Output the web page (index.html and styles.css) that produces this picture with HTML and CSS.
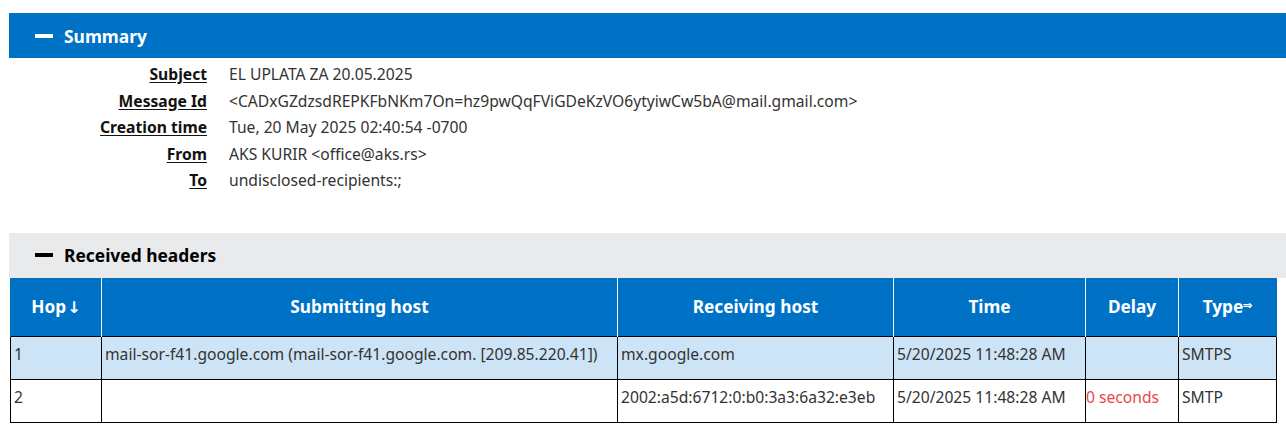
FILE: index.html
```html
<!DOCTYPE html>
<html lang="en">
<head>
<meta charset="utf-8">
<title>Message header analysis</title>
<link rel="stylesheet" href="styles.css">
</head>
<body>
<div class="page">
  <section class="section">
    <h2 class="bar bar-blue"><span class="minus"></span>Summary</h2>
    <table class="summary">
      <tr><th>Subject</th><td>EL UPLATA ZA 20.05.2025</td></tr>
      <tr><th>Message Id</th><td>&lt;CADxGZdzsdREPKFbNKm7On=hz9pwQqFViGDeKzVO6ytyiwCw5bA@mail.gmail.com&gt;</td></tr>
      <tr><th>Creation time</th><td>Tue, 20 May 2025 02:40:54 -0700</td></tr>
      <tr><th>From</th><td>AKS KURIR &lt;office@aks.rs&gt;</td></tr>
      <tr><th>To</th><td>undisclosed-recipients:;</td></tr>
    </table>
  </section>
  <section class="section section-received">
    <h2 class="bar bar-gray"><span class="minus minus-dark"></span>Received headers</h2>
    <table class="hops">
      <colgroup>
        <col class="c-hop"><col class="c-sub"><col class="c-rec"><col class="c-time"><col class="c-delay"><col class="c-type">
      </colgroup>
      <thead>
        <tr><th>Hop<span class="down">↓</span></th><th>Submitting host</th><th>Receiving host</th><th>Time</th><th>Delay</th><th>Type<span class="arrow">⇒</span></th></tr>
      </thead>
      <tbody>
        <tr class="alt"><td>1</td><td>mail-sor-f41.google.com (mail-sor-f41.google.com. [209.85.220.41])</td><td>mx.google.com</td><td>5/20/2025 11:48:28 AM</td><td></td><td>SMTPS</td></tr>
        <tr><td>2</td><td></td><td>2002:a5d:6712:0:b0:3a3:6a32:e3eb</td><td>5/20/2025 11:48:28 AM</td><td class="delay">0 seconds</td><td>SMTP</td></tr>
      </tbody>
    </table>
  </section>
</div>
</body>
</html>
```
FILE: styles.css
```css
html, body {
  margin: 0;
  padding: 0;
  background: #ffffff;
}
body {
  font-family: "Noto Sans", "Open Sans", sans-serif;
  font-size: 15.65px;
  color: #333333;
}
.page {
  padding: 13px 0 0 9px;
}
.bar {
  display: flex;
  align-items: center;
  height: 45px;
  margin: 0;
  padding-left: 26px;
  font-size: 17.4px;
  font-weight: bold;
}
.bar-blue {
  background: #0072c6;
  color: #ffffff;
}
.bar-gray {
  background: #e9eaec;
  color: #000000;
}
.minus {
  display: inline-block;
  width: 18px;
  height: 4px;
  background: #ffffff;
  margin-right: 11px;
}
.minus-dark {
  background: #000000;
}
.summary {
  border-collapse: collapse;
  margin-top: 3px;
}
.summary th, .summary td {
  padding: 0;
  line-height: 26.6px;
  white-space: nowrap;
}
.summary th {
  width: 198px;
  text-align: right;
  font-weight: bold;
  color: #111111;
  text-decoration: underline;
  text-underline-offset: 2px;
}
.summary td {
  padding-left: 22px;
  color: #333333;
}
.section-received {
  margin-top: 39px;
}
.hops {
  border-collapse: collapse;
  table-layout: fixed;
  width: 1266px;
  margin-left: 1px;
}
.c-hop { width: 91px; }
.c-sub { width: 516px; }
.c-rec { width: 276px; }
.c-time { width: 192px; }
.c-delay { width: 93px; }
.c-type { width: 98px; }
.hops thead th {
  background: #0072c6;
  color: #ffffff;
  font-size: 17.25px;
  font-weight: bold;
  height: 58px;
  padding: 0;
  border-left: 1px solid #ffffff;
  border-right: 1px solid #ffffff;
  text-align: center;
}
.hops thead th:first-child {
  border-left-color: #0072c6;
}
.hops thead th:last-child {
  border-right-color: #0072c6;
}
.down {
  font-family: "DejaVu Sans", sans-serif;
  font-size: 16px;
  margin-left: 1px;
}
.arrow {
  font-size: 11px;
  vertical-align: 4px;
}
.hops td {
  border: 1px solid #000000;
  height: 43px;
  padding: 6px 3px 0 3px;
  vertical-align: top;
  line-height: 22px;
  color: #333333;
  white-space: nowrap;
  overflow: hidden;
  box-sizing: border-box;
}
.hops tr.alt td {
  background: #cde4f6;
}
.hops td.delay {
  color: #e8474c;
  padding-left: 0;
}
```
